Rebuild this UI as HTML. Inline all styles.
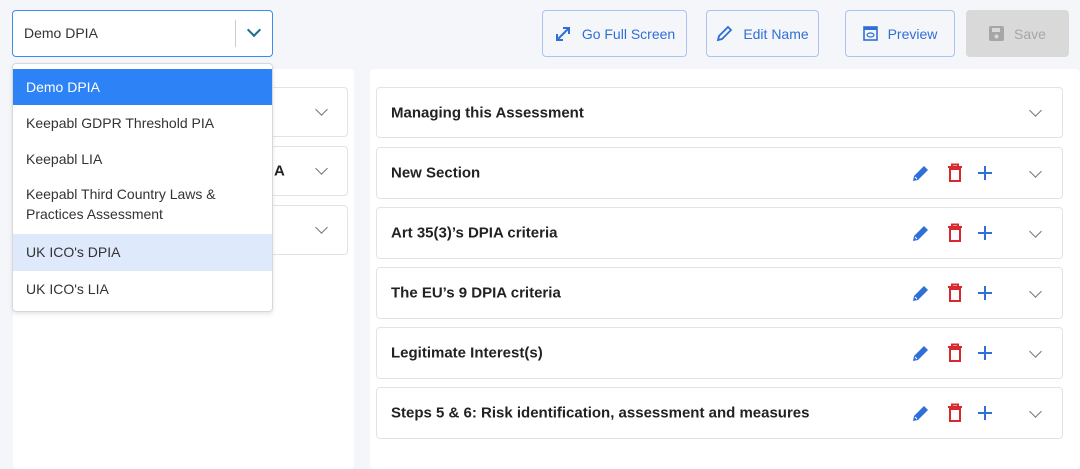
<!DOCTYPE html>
<html><head><style>
body{margin:0;width:1080px;height:456px;background:#f5f6f9;font-family:"Liberation Sans",sans-serif;position:relative;overflow:hidden;color:#222}
.a{position:absolute;box-sizing:border-box}
.panel{background:#fff;border-radius:4px}
.row{background:#fff;border:1px solid #e2e3e6;border-radius:4px;font-size:15px;font-weight:bold;color:#222}
.row span{position:absolute;left:14px;top:50%;transform:translateY(-50%)}
.chev{position:absolute;width:8px;height:8px;border-right:1.6px solid #777;border-bottom:1.6px solid #777;transform:rotate(45deg)}
.btn{border:1px solid #a9c4ef;border-radius:4px;color:#2e6fd8;font-size:14px;display:flex;align-items:center;justify-content:center;gap:10px}
.opt{position:absolute;left:0;right:0;font-size:14px;color:#333;padding-left:13px}
.ic{position:absolute;top:50%;transform:translateY(-50%)}
</style></head><body>
<div class="a panel" style="left:13px;top:69px;width:341px;height:400px"></div>
<div class="a panel" style="left:370px;top:69px;width:710px;height:400px"></div>

<div class="a row" style="left:13px;top:87px;width:335px;height:50px"><i class="chev" style="left:303px;top:17px"></i></div>
<div class="a row" style="left:13px;top:146px;width:335px;height:50px"><span style="left:260px">A</span><i class="chev" style="left:303px;top:17px"></i></div>
<div class="a row" style="left:13px;top:205px;width:335px;height:50px"><i class="chev" style="left:303px;top:17px"></i></div>

<div class="a" style="left:12px;top:10px;width:261px;height:47px;background:#fff;border:1.5px solid #3c8cf0;border-radius:4px;font-size:14px;color:#333">
<span style="position:absolute;left:11px;top:14px">Demo DPIA</span>
<div style="position:absolute;left:222px;top:9px;width:1px;height:27px;background:#ccc"></div>
<i class="chev" style="left:236px;top:14px;border-color:#1a6e8c;border-width:2px"></i>
</div>

<div class="a" style="left:12px;top:63px;width:261px;height:249px;background:#fff;border:1px solid #d7d8db;border-radius:4px;box-shadow:0 2px 4px rgba(0,0,0,.1)">
<div class="opt" style="top:5px;height:36px;line-height:36px;background:#2d83f5;color:#fff">Demo DPIA</div>
<div class="opt" style="top:41px;height:36px;line-height:36px">Keepabl GDPR Threshold PIA</div>
<div class="opt" style="top:77px;height:36px;line-height:36px">Keepabl LIA</div>
<div class="opt" style="top:120px;line-height:20px">Keepabl Third Country Laws &amp;<br>Practices Assessment</div>
<div class="opt" style="top:170px;height:37px;line-height:37px;background:#deeafb">UK ICO's DPIA</div>
<div class="opt" style="top:207px;height:37px;line-height:37px">UK ICO's LIA</div>
</div>

<div class="a btn" style="left:542px;top:10px;width:145px;height:47px">
<svg width="18" height="18" viewBox="0 0 18 18" fill="none" stroke="#2e6fd8" stroke-width="2"><path d="M3 15L15 3M9 3h6v6M3 9v6h6"/></svg>Go Full Screen</div>
<div class="a btn" style="left:706px;top:10px;width:113px;height:47px">
<svg width="17" height="17" viewBox="0 0 17 17"><path d="M2 15l1-4 9-9 3 3-9 9z" fill="none" stroke="#2e6fd8" stroke-width="1.8"/></svg>Edit Name</div>
<div class="a btn" style="left:845px;top:10px;width:110px;height:47px">
<svg width="15" height="15" viewBox="0 0 15 15"><rect x="1" y="1" width="13" height="13" fill="none" stroke="#2e6fd8" stroke-width="1.6"/><rect x="1" y="1" width="13" height="3" fill="#2e6fd8"/><ellipse cx="7.5" cy="9" rx="3.5" ry="2" fill="none" stroke="#2e6fd8" stroke-width="1.2"/></svg>Preview</div>
<div class="a btn" style="left:966px;top:10px;width:103px;height:47px;background:#d9d9da;border-color:#d9d9da;color:#a6a6a6">
<svg width="15" height="15" viewBox="0 0 15 15"><rect x="0" y="0" width="15" height="15" rx="2" fill="#a6a6a6"/><rect x="3" y="2" width="8" height="4" fill="#d9d9da"/><circle cx="7.5" cy="10.5" r="2" fill="#d9d9da"/></svg>Save</div>

<div class="a row" style="left:376px;top:87px;width:687px;height:51px"><span>Managing this Assessment</span><i class="chev" style="left:654px;top:18px"></i></div>

<div id="rows"></div>
<script>
var t=["New Section","Art 35(3)’s DPIA criteria","The EU’s 9 DPIA criteria","Legitimate Interest(s)","Steps 5 &amp; 6: Risk identification, assessment and measures"];
var h="";
t.forEach(function(s,i){var y=147+i*60;
h+='<div class="a row" style="left:376px;top:'+y+'px;width:687px;height:52px"><span>'+s+'</span>'+
'<svg class="ic" style="left:534px" width="20" height="20" viewBox="0 0 20 20"><path d="M2 18l1-5 10-10 4 4-10 10z" fill="#2e6fd8"/><path d="M4 14l2 2" stroke="#fff" stroke-width="1"/></svg>'+
'<svg class="ic" style="left:570px" width="16" height="20" viewBox="0 0 16 20"><path d="M1 4h14M5 4V1.5h6V4" stroke="#d9292f" stroke-width="2" fill="none"/><rect x="3" y="6" width="10" height="12" fill="none" stroke="#d9292f" stroke-width="2"/></svg>'+
'<svg class="ic" style="left:600px" width="16" height="16" viewBox="0 0 16 16"><path d="M8 1v14M1 8h14" stroke="#2e6fd8" stroke-width="2"/></svg>'+
'<i class="chev" style="left:654px;top:19px"></i></div>';});
document.getElementById("rows").innerHTML=h;
</script>
</body></html>
